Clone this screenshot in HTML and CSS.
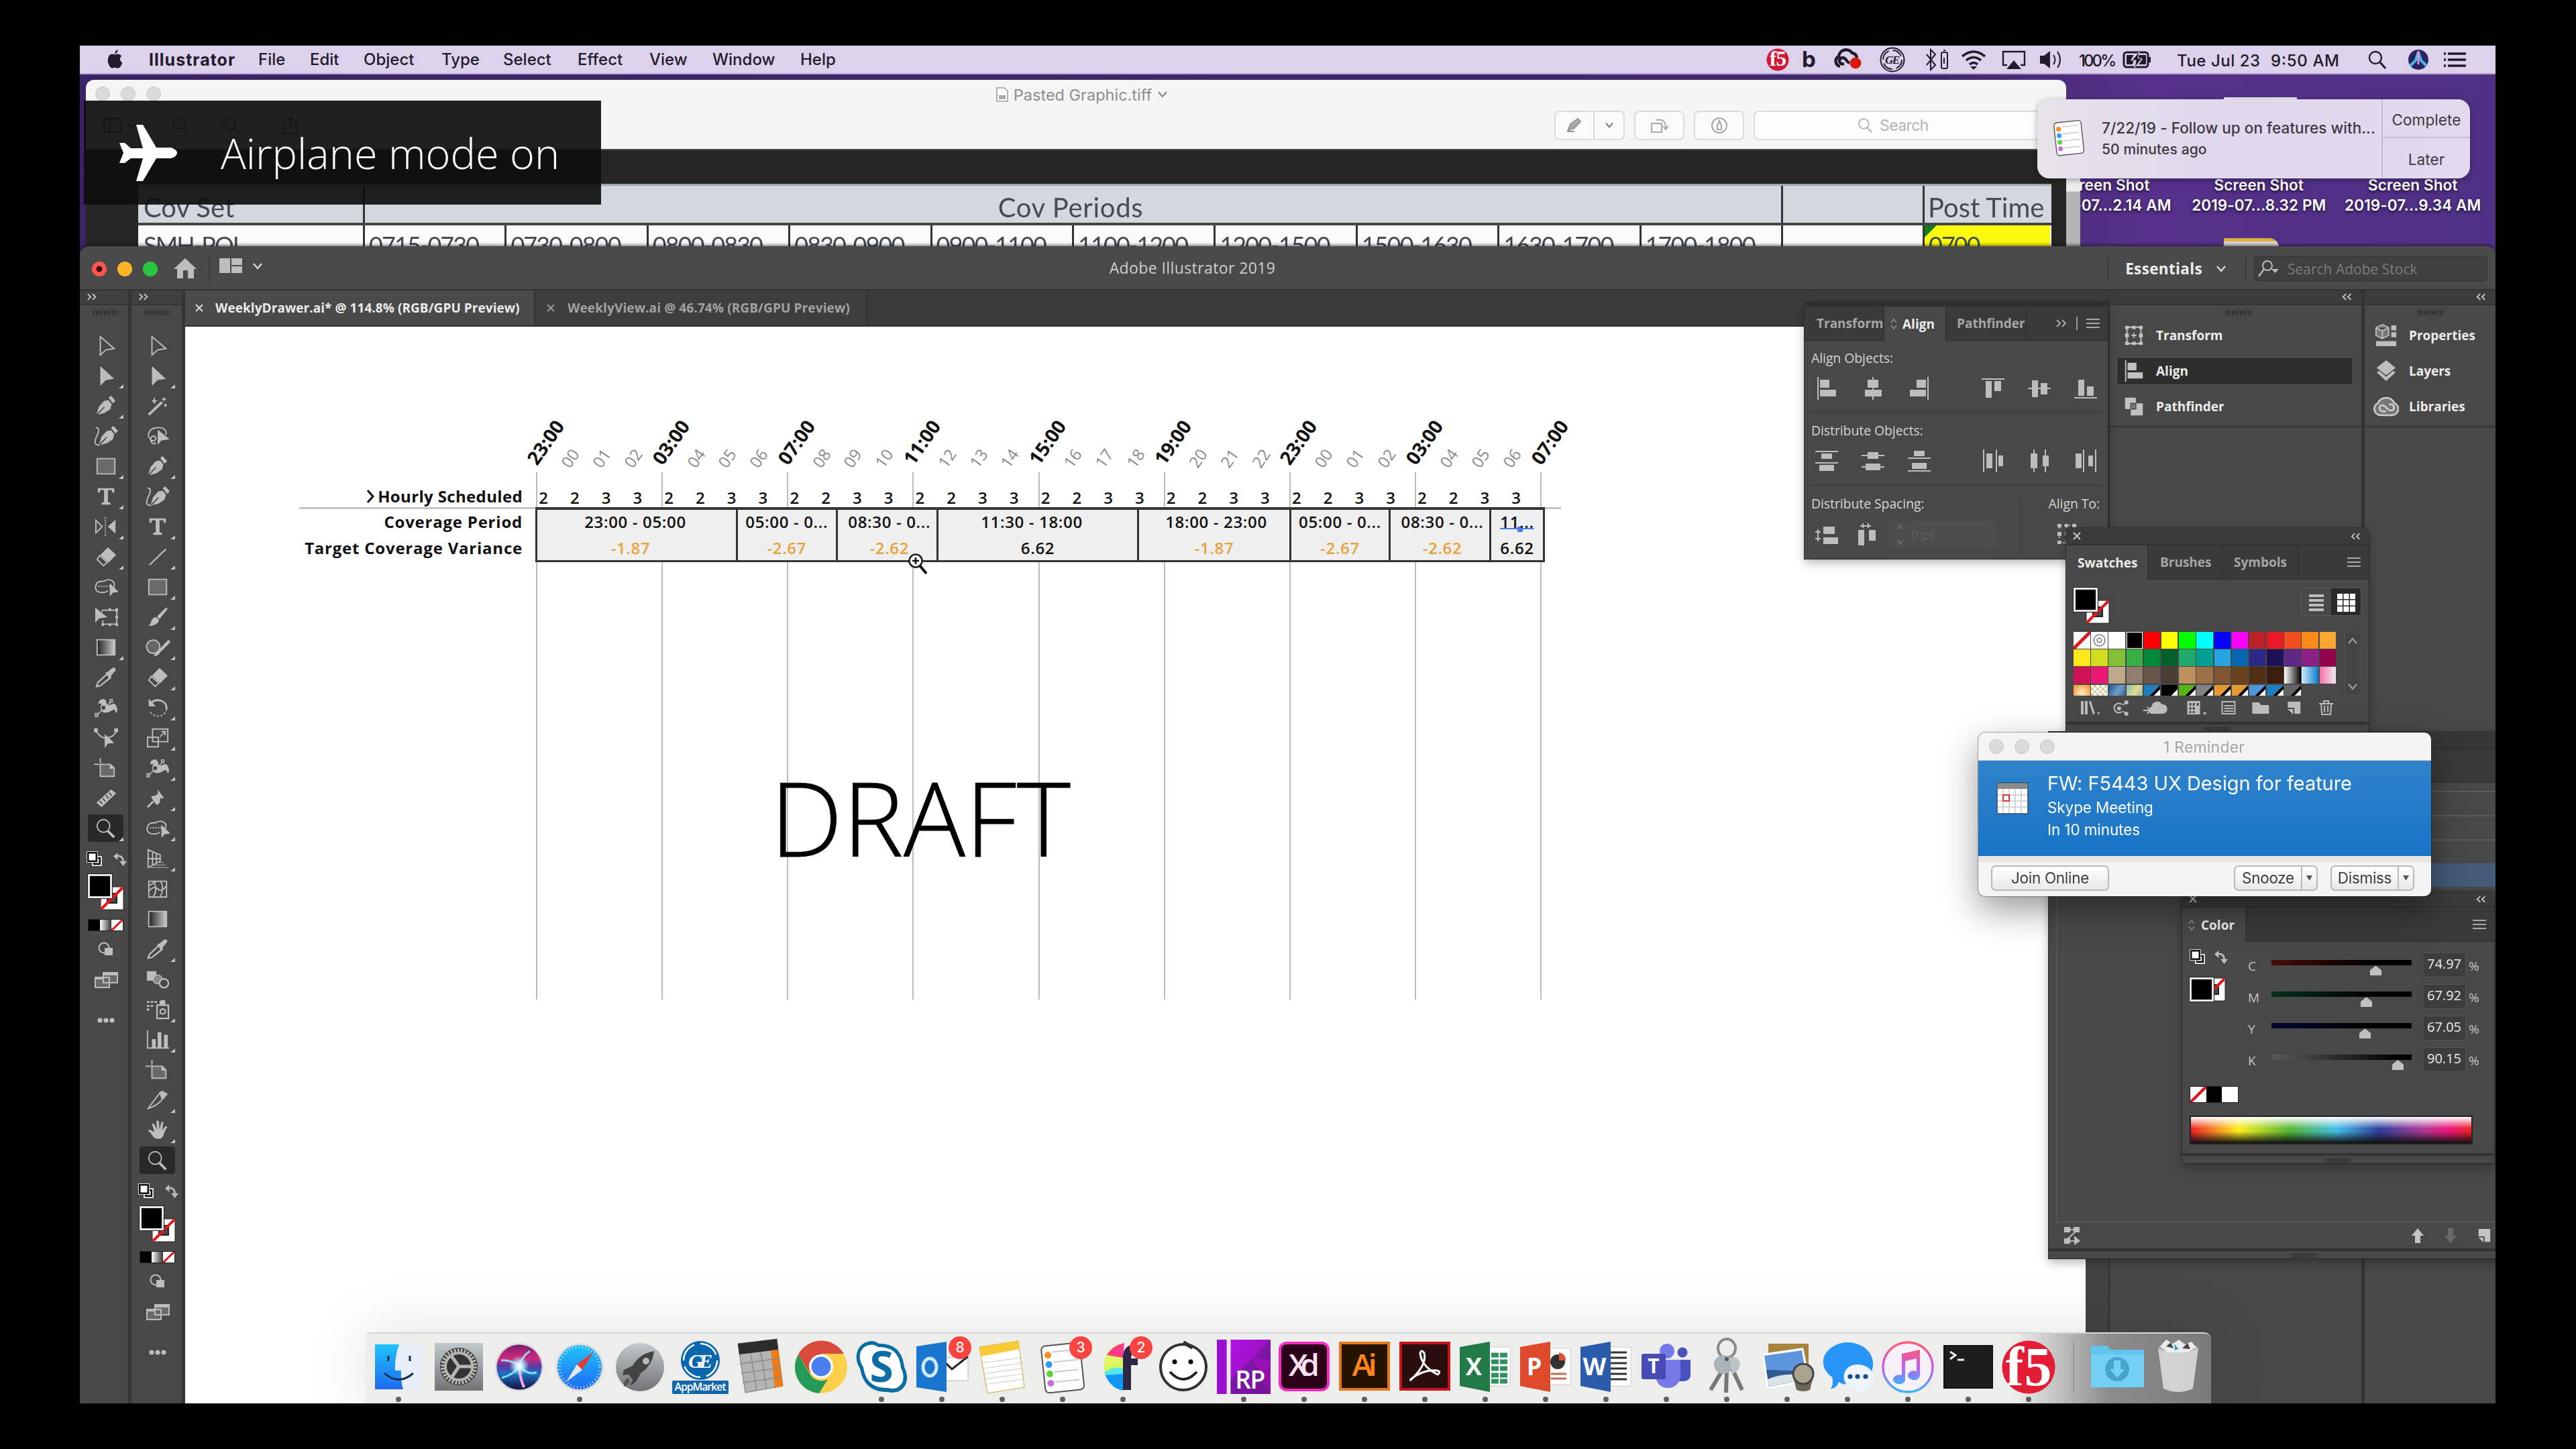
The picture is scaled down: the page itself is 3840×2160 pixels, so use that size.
FILE: index.html
```html
<!DOCTYPE html>
<html lang="en">
<head>
<meta charset="utf-8">
<title>Adobe Illustrator 2019</title>
<link rel="stylesheet" href="styles.css">
</head>
<body>
<svg class="defs" width="0" height="0" aria-hidden="true">
  <defs>
    <linearGradient id="g-bw"><stop offset="0" stop-color="#222"/><stop offset="1" stop-color="#ccc"/></linearGradient>
    <linearGradient id="g-gray" x2="0" y2="1"><stop offset="0" stop-color="#c3c9cc"/><stop offset="1" stop-color="#717475"/></linearGradient>
    <linearGradient id="g-blue" x2="0" y2="1"><stop offset="0" stop-color="#1fc3fb"/><stop offset="1" stop-color="#1e6bf1"/></linearGradient>
    <linearGradient id="g-siri" x2="0" y2="1"><stop offset="0" stop-color="#7a1f6e"/><stop offset=".3" stop-color="#d0287f"/><stop offset=".48" stop-color="#5a3aa0"/><stop offset=".65" stop-color="#1f6fc4"/><stop offset="1" stop-color="#161040"/></linearGradient>
    <radialGradient id="g-glow"><stop offset="0" stop-color="#fff"/><stop offset=".35" stop-color="#d5f6ff" stop-opacity=".9"/><stop offset="1" stop-color="#8ff" stop-opacity="0"/></radialGradient>
    <linearGradient id="g-note" x2="0" y2="1"><stop offset="0" stop-color="#fb5b74"/><stop offset=".5" stop-color="#c75bf0"/><stop offset="1" stop-color="#38b5f8"/></linearGradient>
    <linearGradient id="g-rp" x2="1" y2="1"><stop offset="0" stop-color="#b114e8"/><stop offset="1" stop-color="#8a0d9b"/></linearGradient>
    <symbol id="i-sel" viewBox="0 0 40 36"><path d="M11 4v29l9-8 13-2z" fill="none" stroke="currentColor" stroke-width="2"/></symbol>
    <symbol id="i-dsel" viewBox="0 0 40 36"><path d="M11 3v31l9-9 13-2z" fill="currentColor"/></symbol>
    <symbol id="i-pen" viewBox="0 0 40 36"><path d="M5 31l4-12 8-9 7-1 5 6-2 8-9 6-11 3 11-12-1-1z" fill="currentColor"/><path d="M24 5l4-3 7 8-4 4z" fill="currentColor"/></symbol>
    <symbol id="i-curve" viewBox="0 0 40 36"><path d="M9 31l4-12 8-9 7-1 5 6-2 8-9 6-11 3 11-12-1-1z" fill="currentColor"/><path d="M28 5l4-3 7 8-4 4z" fill="currentColor"/><path d="M4 5c6-1 5 6 2 12-4 8-6 16 4 15" fill="none" stroke="currentColor" stroke-width="2"/></symbol>
    <symbol id="i-rect" viewBox="0 0 40 36"><path d="M6 6h28v24H6z" fill="#6a6a6a" stroke="currentColor" stroke-width="2"/></symbol>
    <symbol id="i-type" viewBox="0 0 40 36"><path d="M7 5h26v7h-3l-1-4h-6v19l4 1v3H13v-3l4-1V8h-6l-1 4H7z" fill="currentColor"/></symbol>
    <symbol id="i-reflect" viewBox="0 0 40 36"><path d="M4 8v20l10-10z" fill="none" stroke="currentColor" stroke-width="2"/><path d="M35 7v22L23 18z" fill="currentColor"/><path d="M19 3v30" stroke="currentColor" stroke-width="2" stroke-dasharray="2 2"/></symbol>
    <symbol id="i-eraser" viewBox="0 0 40 36"><path d="M11 15L23 3l13 12-12 12z" fill="currentColor"/><path d="M10 16L6 22l10 10 6-5z" fill="none" stroke="currentColor" stroke-width="2"/></symbol>
    <symbol id="i-builder" viewBox="0 0 40 36"><path d="M9 26C3 24 2 18 5 13s9-4 12-4c6-5 16-2 16 5v4M9 26c5 1 11 1 14-2" fill="none" stroke="currentColor" stroke-width="2"/><path d="M8 17h18" stroke="currentColor" stroke-width="2" stroke-dasharray="2 2"/><path d="M26 12v21l5-6 9-1z" fill="currentColor"/></symbol>
    <symbol id="i-free" viewBox="0 0 40 36"><path d="M3 3v24l6-7 13-2z" fill="currentColor"/><path d="M14 7h23v22H15v-6M14 7v3" fill="none" stroke="currentColor" stroke-width="2"/><path d="M35 4h4v5h-4zM24 4h4v4h-4zM35 16h4v4h-4zM35 28h4v4h-4zM24 28h4v4h-4zM13 28h4v4h-4z" fill="currentColor"/></symbol>
    <symbol id="i-grad" viewBox="0 0 40 36"><path d="M6 6h28v24H6z" fill="url(#g-bw)" stroke="currentColor" stroke-width="2"/></symbol>
    <symbol id="i-drop" viewBox="0 0 40 36"><path d="M22 12L7 26l-2 6 6-1 16-13" fill="none" stroke="currentColor" stroke-width="2.4"/><path d="M19 10l4-1 7-6q4-1 5 1 1 4-2 5l-5 6v4l-2 2z" fill="currentColor"/></symbol>
    <symbol id="i-puppet" viewBox="0 0 40 36"><path d="M5 30L29 8" stroke="currentColor" stroke-width="1.6"/><path d="M3 27h4v5H3zM26 5h4v4h-4z" fill="none" stroke="currentColor" stroke-width="1.5"/><path d="M12 5q8-3 9 6 1 5 7 2 9-5 10 10l-2 4q-2-9-8-4-10 6-15 0-3-4 0-11-3-2-5 1 0-6 4-8z" fill="currentColor"/><circle cx="16" cy="18" r="4" fill="#484848" stroke="currentColor" stroke-width="1.5"/></symbol>
    <symbol id="i-anchor" viewBox="0 0 40 36"><path d="M3 6q10 14 17 12 12 0 17-12" fill="none" stroke="currentColor" stroke-width="2"/><path d="M1 3h6v6H1zM33 3h6v6h-6zM18 12v22l5-7 10-1z" fill="currentColor"/></symbol>
    <symbol id="i-artboard" viewBox="0 0 40 36"><path d="M1 12h9M11 2v8" stroke="currentColor" stroke-width="2"/><path d="M11 12h16l6 6v13H11z" fill="#6a6a6a" stroke="currentColor" stroke-width="2"/><path d="M26 12v7h7z" fill="currentColor"/></symbol>
    <symbol id="i-measure" viewBox="0 0 40 36"><path d="M5 25L28 4l8 6-23 22z" fill="currentColor"/><path d="M10 22l4 5M15 18l4 5M20 13l4 5M25 9l4 5" stroke="#484848" stroke-width="2"/></symbol>
    <symbol id="i-zoom" viewBox="0 0 40 36"><circle cx="16" cy="14" r="10" fill="none" stroke="currentColor" stroke-width="2"/><path d="M23 22l10 10" stroke="currentColor" stroke-width="4"/></symbol>
    <symbol id="i-wand" viewBox="0 0 40 36"><path d="M6 32L27 12" stroke="currentColor" stroke-width="4"/><path d="M15 4l1 5 4 1-4 2-1 4-2-4-3-2 3-1zM30 3l1 3 3 1-3 2-1 3-1-3-3-2 3-1zM32 14l3 3-3 3-2-3z" fill="currentColor"/></symbol>
    <symbol id="i-lasso" viewBox="0 0 40 36"><path d="M9 23c-6-3-5-16 8-18 15-2 19 7 15 11M9 23c2 5 9 2 8-2s-8-4-8 2c0 6 6 10 8 5" fill="none" stroke="currentColor" stroke-width="2"/><path d="M20 8v24l6-7 13-2z" fill="currentColor"/></symbol>
    <symbol id="i-line" viewBox="0 0 40 36"><path d="M7 31L33 6" stroke="currentColor" stroke-width="2.4"/></symbol>
    <symbol id="i-brush" viewBox="0 0 40 36"><path d="M19 17L33 3q3 0 2 3L23 21z" fill="currentColor"/><path d="M16 18q6 1 6 6-4 8-17 8 4-3 5-8 2-5 6-6z" fill="currentColor"/></symbol>
    <symbol id="i-blob" viewBox="0 0 40 36"><circle cx="13" cy="17" r="10.500" fill="#666" stroke="currentColor" stroke-width="2"/><path d="M39 7q2 3-1 5L24 26q-3 6-10 6 3-8 7-9L36 7z" fill="currentColor"/></symbol>
    <symbol id="i-rotate" viewBox="0 0 40 36"><path d="M9 11c9-9 26-5 25 9" fill="none" stroke="currentColor" stroke-width="3"/><path d="M34 20C31 34 14 35 7 23" fill="none" stroke="currentColor" stroke-width="2" stroke-dasharray="3 3"/><path d="M6 4v12h11z" fill="currentColor"/></symbol>
    <symbol id="i-scale" viewBox="0 0 40 36"><path d="M12 4h24v20H12zM4 17h17v15H4zM24 16l8-8m-6 0h6v6" fill="none" stroke="currentColor" stroke-width="2"/></symbol>
    <symbol id="i-pin" viewBox="0 0 40 36"><path d="M4 32l9-9" stroke="currentColor" stroke-width="3"/><path d="M17 4l13 12-6 1 1 7-4 5-7-6-5-6 6-2 4-4z" fill="currentColor" transform="rotate(12 20 18)"/></symbol>
    <symbol id="i-persp" viewBox="0 0 40 36"><path d="M5 4v28L24 22V12zM5 18h19M12 7v22M18 9v17" fill="none" stroke="currentColor" stroke-width="2"/><path d="M15 28h18M8 32h29M22 24h8" stroke="currentColor"/></symbol>
    <symbol id="i-mesh" viewBox="0 0 40 36"><path d="M6 6h28v25H6zM6 22q8-10 14-4t14-5M13 6q8 12 0 25M25 6q6 12-1 25M6 13q8-4 12-7" fill="none" stroke="currentColor" stroke-width="2"/></symbol>
    <symbol id="i-blend" viewBox="0 0 40 36"><path d="M3 5h15v15H3z" fill="currentColor"/><circle cx="20" cy="18" r="7" fill="#888" stroke="currentColor" stroke-width="1.500"/><circle cx="30" cy="24" r="7" fill="#484848" stroke="currentColor" stroke-width="2.400"/></symbol>
    <symbol id="i-spray" viewBox="0 0 40 36"><path d="M19 11h18v21H19z" fill="none" stroke="currentColor" stroke-width="2.400"/><path d="M23 10V5l3-2h6v7z" fill="currentColor"/><circle cx="28" cy="21" r="4" fill="none" stroke="currentColor" stroke-width="2.400"/><path d="M3 6h16M3 12h10M3 18h5" stroke="currentColor" stroke-width="3" stroke-dasharray="4 2"/></symbol>
    <symbol id="i-graph" viewBox="0 0 40 36"><path d="M4 3v28h34" fill="none" stroke="currentColor" stroke-width="2"/><path d="M11 17h6v14h-6zM20 6h6v25h-6zM30 10h6v21h-6z" fill="currentColor"/></symbol>
    <symbol id="i-slice" viewBox="0 0 40 36"><path d="M24 6L5 31q14-4 22-14z" fill="none" stroke="currentColor" stroke-width="2"/><path d="M23 7l4-4 9 5-7 9z" fill="currentColor"/></symbol>
    <symbol id="i-hand" viewBox="0 0 40 36"><path d="M13 28Q8 20 5 19q1-3 5-1l5 3-4-13q3-2 4 1l4 8-1-13q2-3 4 0l1 13 3-12q3-2 3 1l-2 12 5-6q3-1 3 1-5 8-6 14-5 7-14 3z" fill="currentColor"/></symbol>
    <symbol id="i-default" viewBox="0 0 24 24"><path d="M9 8h13v13H9z" fill="#000" stroke="#ddd" stroke-width="2"/><path d="M13 12h5v5h-5z" fill="none" stroke="#ddd" stroke-width="1.500"/><path d="M2 2h13v13H2z" fill="#fff" stroke="#111" stroke-width="3"/><path d="M.5.500h16v16H.5z" fill="none" stroke="#ddd"/></symbol>
    <symbol id="i-swap" viewBox="0 0 24 24"><path d="M5 7q12-3 12 10" fill="none" stroke="#bdbdbd" stroke-width="3"/><path d="M8 1v12L1 7zM11 15h12l-6 8z" fill="#bdbdbd"/></symbol>
    <symbol id="i-none" viewBox="0 0 36 36"><path d="M1 1h34v34H1z" fill="#fff" stroke="#222"/><path d="M11 11h14v14H11z" fill="#484848" stroke="#222" stroke-width="2"/><path d="M2 34L34 2" stroke="#e8151b" stroke-width="4"/></symbol>
    <symbol id="i-drawmode" viewBox="0 0 24 24"><circle cx="9" cy="10" r="7.500" fill="none" stroke="#bdbdbd" stroke-width="2"/><path d="M10 10h12v11H10z" fill="#bdbdbd"/></symbol>
    <symbol id="i-screen" viewBox="0 0 40 30"><path d="M4 10h21v15H4zM16 3h21v15H16z" fill="#6a6a6a" stroke="#bdbdbd" stroke-width="2"/><path d="M15 2h23v5H15zM3 9h12v4H3z" fill="#bdbdbd"/></symbol>
    <symbol id="i-dots" viewBox="0 0 40 12"><circle cx="10" cy="6" r="4" fill="#bdbdbd"/><circle cx="20" cy="6" r="4" fill="#bdbdbd"/><circle cx="30" cy="6" r="4" fill="#bdbdbd"/></symbol>
    <symbol id="i-x" viewBox="0 0 14 14"><path d="M2 2l10 10M12 2L2 12" stroke="currentColor" stroke-width="2"/></symbol>
    <symbol id="i-ll" viewBox="0 0 18 12"><path d="M7 1L2 6l5 5M15 1l-5 5 5 5" fill="none" stroke="currentColor" stroke-width="2"/></symbol>
    <symbol id="i-rr" viewBox="0 0 18 12"><path d="M2 1l5 5-5 5M10 1l5 5-5 5" fill="none" stroke="currentColor" stroke-width="2"/></symbol>
    <symbol id="i-menu" viewBox="0 0 20 16"><path d="M0 2h20M0 8h20M0 14h20" stroke="currentColor" stroke-width="2"/></symbol>
    <symbol id="i-updown" viewBox="0 0 12 20"><path d="M2 8l4-5 4 5M2 12l4 5 4-5" fill="none" stroke="#888" stroke-width="1.800"/></symbol>
    <symbol id="i-chev" viewBox="0 0 16 12"><path d="M2 2l6 7 6-7" fill="none" stroke="currentColor" stroke-width="2.400"/></symbol>
    <symbol id="i-mag" viewBox="0 0 28 28"><circle cx="12" cy="11" r="8.500" fill="none" stroke="currentColor" stroke-width="2.200"/><path d="M18 18l8 8" stroke="currentColor" stroke-width="2.600"/></symbol>
    <symbol id="a-l" viewBox="0 0 34 36"><path d="M3 1h2v34H3zM7 5h14v12H7zM7 20h24v10H7z" fill="currentColor"/></symbol>
    <symbol id="a-c" viewBox="0 0 34 36"><path d="M16 1h2v34h-2zM9 5h16v12H9zM5 20h25v10H5z" fill="currentColor"/></symbol>
    <symbol id="a-r" viewBox="0 0 34 36"><path d="M29 1h2v34h-2zM13 5h14v12H13zM3 20h24v10H3z" fill="currentColor"/></symbol>
    <symbol id="a-t" viewBox="0 0 34 36"><path d="M0 3h34v2H0zM6 7h9v25H6zM19 7h10v15H19z" fill="currentColor"/></symbol>
    <symbol id="a-m" viewBox="0 0 34 36"><path d="M0 17h34v2H0zM6 6h9v25H6zM19 10h10v17H19z" fill="currentColor"/></symbol>
    <symbol id="a-b" viewBox="0 0 34 36"><path d="M0 31h34v2H0zM6 5h9v24H6zM19 15h10v14H19z" fill="currentColor"/></symbol>
    <symbol id="d-t" viewBox="0 0 34 36"><path d="M0 3h34v2H0zM9 7h16v8H9zM0 20h34v2H0zM6 24h22v9H6z" fill="currentColor"/></symbol>
    <symbol id="d-m" viewBox="0 0 34 36"><path d="M0 9h34v2H0zM9 5h16v10H9zM0 26h34v2H0zM6 22h22v10H6z" fill="currentColor"/></symbol>
    <symbol id="d-b" viewBox="0 0 34 36"><path d="M9 3h16v8H9zM0 13h34v2H0zM6 21h22v9H6zM0 32h34v2H0z" fill="currentColor"/></symbol>
    <symbol id="d-l" viewBox="0 0 34 36"><path d="M2 1h2v34H2zM7 7h9v22H7zM21 1h2v34h-2zM25 10h7v16h-7z" fill="currentColor"/></symbol>
    <symbol id="d-c" viewBox="0 0 34 36"><path d="M8 1h2v34H8zM4 7h10v22H4zM25 1h2v34h-2zM22 10h9v16h-9z" fill="currentColor"/></symbol>
    <symbol id="d-r" viewBox="0 0 34 36"><path d="M2 7h9v22H2zM13 1h2v34h-2zM21 10h7v16h-7zM31 1h2v34h-2z" fill="currentColor"/></symbol>
    <symbol id="s-v" viewBox="0 0 34 36"><path d="M12 5h17v11H12zM12 21h22v10H12zM0 12h8v2H0zM0 22h8v2H0zM3 9h2v18H3z" fill="currentColor"/></symbol>
    <symbol id="s-h" viewBox="0 0 34 36"><path d="M4 10h9v23H4zM20 10h10v16H20zM10 0h2v7h-2zM18 0h2v7h-2zM7 3h16v2H7z" fill="currentColor"/></symbol>
    <symbol id="p-tr" viewBox="0 0 34 36"><path d="M6 5h22v26H6z" fill="none" stroke="currentColor" stroke-width="2" /><path d="M3 3h6v5H3zM14 3h6v5h-6zM25 3h6v5h-6zM3 15h6v6H3zM25 15h6v6h-6zM3 28h6v5H3zM14 28h6v5h-6zM25 28h6v5h-6zM16 14h2v8h-2zM13 17h8v2h-8z" fill="currentColor"/></symbol>
    <symbol id="p-sel" viewBox="0 0 34 36"><path d="M6 5h22v26H6z" fill="none" stroke="currentColor" stroke-width="2" stroke-dasharray="2 5"/><path d="M3 3h6v5H3zM14 3h5v5h-5zM25 3h6v5h-6zM3 15h6v6H3zM14 15h5v5h-5zM25 15h6v6h-6zM3 28h6v5H3zM14 28h6v5h-6zM25 28h6v5h-6z" fill="currentColor"/></symbol>
    <symbol id="p-pf" viewBox="0 0 34 36"><path d="M3 4h17v18H3zM12 13h19v19H12z" fill="currentColor"/><path d="M12 13h8v9h-8z" fill="#777" stroke="#484848" stroke-width="1.500"/></symbol>
    <symbol id="p-prop" viewBox="0 0 36 36"><path d="M12 1l10 5v12l-10 5-10-5V6zM2 6l10 5 10-5M12 11v12" fill="#777" stroke="#bdbdbd" stroke-width="2"/><path d="M26 2h8v8h-8zM26 13h8v8h-8zM2 27h32v8H2z" fill="#bdbdbd"/></symbol>
    <symbol id="p-layers" viewBox="0 0 36 36"><path d="M18 1l15 12-15 12L3 13z" fill="#bdbdbd"/><path d="M3 20l4-2 11 9 11-9 4 2-15 14z" fill="#bdbdbd"/></symbol>
    <symbol id="p-lib" viewBox="0 0 44 36"><path d="M12 33a11 11 0 0 1-4-21A15 14 0 0 1 36 12a12 11 0 0 1-4 21z" fill="#777" stroke="#cfcfcf" stroke-width="3"/><path d="M22 26c-14 4-14-13-5-10 5 2 8 9 13 9 9 0 6-15-3-10" fill="none" stroke="#cfcfcf" stroke-width="3"/></symbol>
    <symbol id="i-new" viewBox="0 0 24 24"><path d="M3 1h19v21H13v-9H3z" fill="currentColor"/><path d="M3 15h8v8z" fill="currentColor"/></symbol>
    <symbol id="reminders" viewBox="0 0 80 80"><g transform="rotate(-6 40 40)"><rect x="11" y="6" width="58" height="70" rx="6" fill="#fdfdfd" stroke="#555" stroke-width="2"/><path d="M27 16h36M27 31h36M27 46h36M27 61h36" stroke="#ccc" stroke-width="2"/><circle cx="20" cy="20" r="5" fill="#fb8a1e"/><circle cx="20" cy="34" r="5" fill="#2a9df4"/><circle cx="20" cy="48" r="5" fill="#5fd13c"/><circle cx="20" cy="62" r="5" fill="#c46fdc"/></g></symbol>
  </defs>
</svg>

<main class="desktop">
  <section class="shots">
    <p>Screen Shot<br>2019-07...2.14 AM</p>
    <p>Screen Shot<br>2019-07...8.32 PM</p>
    <p>Screen Shot<br>2019-07...9.34 AM</p>
  </section>
  <i class="thumb-top"></i><i class="thumb"></i>
  <i class="back-window"></i>

  <header class="menubar">
    <svg class="apple" viewBox="0 0 26 32"><path d="M18 1q0 5-5 7 0-5 5-7zM13 9q7-3 11 2-6 5 1 11-4 11-9 8-3-1-6 0Q5 32 2 20 2 8 9 8q2 0 4 1z" fill="#231a2c"/></svg>
    <nav><b>Illustrator</b><span>File</span><span>Edit</span><span>Object</span><span>Type</span><span>Select</span><span>Effect</span><span>View</span><span>Window</span><span>Help</span></nav>
    <svg class="status" viewBox="0 0 1100 42" width="1100" height="42">
      <circle cx="31" cy="21" r="16.500" fill="#d11a38"/><text x="19" y="30" class="f5s" textLength="25">f5</text>
      <text x="67" y="32" class="bs">b</text>
      <path d="M124 31a8 8 0 0 1-2-15 11 11 0 0 1 20-5q6 1 7 7M130 27c-9 2-9-9-2-9 5 0 5 6 10 8" fill="none" stroke="#231a2c" stroke-width="4.500"/><circle cx="147" cy="26" r="8.500" fill="#d81a0c"/>
      <circle cx="202" cy="21" r="17.500" fill="none" stroke="#231a2c" stroke-width="2"/><circle cx="202" cy="21" r="14" fill="none" stroke="#231a2c" stroke-width="2" stroke-dasharray="16 6"/><text x="191" y="27" class="ges" textLength="22">GE</text>
      <path d="M253 13l13 16-7 7V6l7 7-13 16" fill="none" stroke="#231a2c" stroke-width="2"/><rect x="275" y="10" width="9" height="24" rx="2" fill="none" stroke="#231a2c" stroke-width="2"/><path d="M278 7h3M279 18v9" stroke="#231a2c" stroke-width="2"/>
      <path d="M306 16q17-14 34 0M312 22q11-9 22 0M317 28q6-5 12 0" fill="none" stroke="#231a2c" stroke-width="3.600"/><path d="M318 31h10l-5 5z" fill="#231a2c"/>
      <path d="M373 29h-6V9h32v20h-6" fill="none" stroke="#231a2c" stroke-width="2.400"/><path d="M383 22l11 13h-22z" fill="#231a2c"/>
      <path d="M422 15h6l9-7v26l-9-7h-6z" fill="#231a2c"/><path d="M442 14q5 7 0 14M448 9q8 12 0 24" fill="none" stroke="#231a2c" stroke-width="2"/>
      <text x="480" y="30.500" class="mb" textLength="56">100%</text>
      <rect x="547" y="10" width="36" height="22" rx="4" fill="none" stroke="#231a2c" stroke-width="3"/><path d="M551 14h11l-5 8h5l-2 6h-9zM568 14h12v14h-11l6-8h-6zM584 17h3v8h-3z" fill="#231a2c"/><path d="M570 9l-11 13h6l-2 11 11-14h-6z" fill="#231a2c" stroke="#dcd2eb"/>
      <text x="626" y="30.500" class="mb" textLength="124">Tue Jul 23</text><text x="766" y="30.500" class="mb" textLength="102">9:50 AM</text>
      <circle cx="922" cy="18" r="9" fill="none" stroke="#231a2c" stroke-width="2.400"/><path d="M929 25l8 9" stroke="#231a2c" stroke-width="3"/>
      <circle cx="986" cy="21" r="15" fill="#2b2266"/><path d="M986 10l-4 12-8 8M986 10l4 12 8 8" stroke="#4bd" stroke-width="4" fill="none"/><path d="M986 8v20" stroke="#e78bd8" stroke-width="3"/>
      <path d="M1030 12h27M1030 21h27M1030 30h27" stroke="#231a2c" stroke-width="3.400"/><path d="M1024 12h3M1024 21h3M1024 30h3" stroke="#231a2c" stroke-width="3.400"/>
    </svg>
  </header>

  <section class="preview">
    <div class="lights pale"><i></i><i></i><i></i></div>
    <div class="preview-title"><svg width="18" height="22" viewBox="0 0 18 22"><path d="M1 1h11l5 5v15H1z" fill="#fff" stroke="#999" stroke-width="1.500"/><path d="M4 12h10v6H4z" fill="#aaa"/></svg>Pasted Graphic.tiff<svg width="16" height="12"><use href="#i-chev"/></svg></div>
    <div class="preview-tools">
      <span class="pbtn w78"><svg width="52" height="26" viewBox="0 0 52 26"><path d="M2 3h26v20H2zM11 3v20" fill="none" stroke="#444" stroke-width="2"/><path d="M38 10l5 6 5-6" fill="none" stroke="#444" stroke-width="2"/></svg></span>
      <span class="pbtn w75"><svg width="28" height="28"><use href="#i-mag"/></svg></span>
      <span class="pbtn w75 join"><svg width="28" height="28"><use href="#i-mag"/></svg></span>
      <span class="pbtn w78"><svg width="24" height="28" viewBox="0 0 24 28"><path d="M7 10H2v16h20V10h-5M12 18V3M7 7l5-5 5 5" fill="none" stroke="#444" stroke-width="2"/></svg></span>
      <span class="gap"></span>
      <span class="pbtn w60"><svg width="28" height="24" viewBox="0 0 28 24"><path d="M4 20l4-10L19 2l4 4-9 10zM4 21h10" fill="#aaa" stroke="#999" stroke-width="2"/></svg></span>
      <span class="pbtn w46"><svg width="14" height="10"><use href="#i-chev"/></svg></span>
      <span class="pbtn w75 ml"><svg width="30" height="26" viewBox="0 0 30 26"><path d="M3 10h15v13H3zM10 5q15-3 14 13M20 14l4 5 4-5" fill="none" stroke="#a8a8a8" stroke-width="2"/></svg></span>
      <span class="pbtn w75 ml"><svg width="28" height="28" viewBox="0 0 28 28"><circle cx="14" cy="14" r="11" fill="none" stroke="#a8a8a8" stroke-width="2"/><path d="M11 20v-6l3-7 3 7v6z" fill="none" stroke="#a8a8a8" stroke-width="2"/></svg></span>
      <span class="psearch"><svg width="24" height="24"><use href="#i-mag"/></svg>Search</span>
    </div>
    <div class="preview-body">
      <div class="sheet">
        <div class="sheet-head"><span>Cov Set</span><span>Cov Periods</span><span></span><span>Post Time</span></div>
        <div class="sheet-row"><span>SMH-POI</span><span>0715-0730</span><span>0730-0800</span><span>0800-0830</span><span>0830-0900</span><span>0900-1100</span><span>1100-1200</span><span>1200-1500</span><span>1500-1630</span><span>1630-1700</span><span>1700-1800</span><span></span><span class="post">0700</span></div>
      </div>
    </div>
  </section>

  <section class="ai">
    <header class="ai-title">
      <div class="lights"><i class="r"></i><i class="y"></i><i class="g"></i></div>
      <svg class="home" width="36" height="30" viewBox="0 0 36 30"><path d="M18 0l17 16h-4v14h-9V18h-7v12H6V16H1z" fill="#bdbdbd"/></svg>
      <i class="vsep"></i>
      <svg class="arrange" width="34" height="22" viewBox="0 0 34 22"><path d="M0 0h16v22H0zM18 0h16v10H18zM18 12h16v10H18z" fill="#bdbdbd"/></svg>
      <svg class="ac" width="16" height="12"><use href="#i-chev"/></svg>
      <h1>Adobe Illustrator 2019</h1>
      <i class="vsep"></i>
      <span class="ess">Essentials</span><svg width="16" height="12"><use href="#i-chev"/></svg>
      <i class="vsep s2"></i>
      <span class="stock"><svg width="32" height="28" viewBox="0 0 32 28"><circle cx="14" cy="9" r="7" fill="none" stroke="#bbb" stroke-width="2"/><path d="M9 14L1 25" stroke="#bbb" stroke-width="2.400"/><path d="M20 14h11l-5.500 6z" fill="#bbb"/></svg>Search Adobe Stock</span>
    </header>
    <div class="ai-main">
      <aside class="tools">
        <div class="tools-head"><svg width="16" height="11"><use href="#i-rr"/></svg></div>
        <i class="grip"></i>
        <ul>
          <li><svg><use href="#i-sel"/></svg></li>
          <li class="more"><svg><use href="#i-dsel"/></svg></li>
          <li class="more"><svg><use href="#i-pen"/></svg></li>
          <li><svg><use href="#i-curve"/></svg></li>
          <li class="more"><svg><use href="#i-rect"/></svg></li>
          <li class="more"><svg><use href="#i-type"/></svg></li>
          <li class="more"><svg><use href="#i-reflect"/></svg></li>
          <li class="more"><svg><use href="#i-eraser"/></svg></li>
          <li><svg><use href="#i-builder"/></svg></li>
          <li><svg><use href="#i-free"/></svg></li>
          <li class="more"><svg><use href="#i-grad"/></svg></li>
          <li><svg><use href="#i-drop"/></svg></li>
          <li><svg><use href="#i-puppet"/></svg></li>
          <li><svg><use href="#i-anchor"/></svg></li>
          <li><svg><use href="#i-artboard"/></svg></li>
          <li><svg><use href="#i-measure"/></svg></li>
          <li class="more on"><svg><use href="#i-zoom"/></svg></li>
        </ul>
        <div class="swaprow"><svg width="24" height="24"><use href="#i-default"/></svg><svg width="22" height="22"><use href="#i-swap"/></svg></div>
        <div class="fillstroke"><svg width="36" height="36"><use href="#i-none"/></svg><b></b></div>
        <div class="trio"><i></i><i></i><i></i></div>
        <div class="modes"><svg width="24" height="24"><use href="#i-drawmode"/></svg><svg width="40" height="30"><use href="#i-screen"/></svg><svg width="36" height="12"><use href="#i-dots"/></svg></div>
      </aside>
      <aside class="tools">
        <div class="tools-head"><svg width="16" height="11"><use href="#i-rr"/></svg></div>
        <i class="grip"></i>
        <ul>
          <li><svg><use href="#i-sel"/></svg></li>
          <li class="more"><svg><use href="#i-dsel"/></svg></li>
          <li><svg><use href="#i-wand"/></svg></li>
          <li><svg><use href="#i-lasso"/></svg></li>
          <li class="more"><svg><use href="#i-pen"/></svg></li>
          <li><svg><use href="#i-curve"/></svg></li>
          <li class="more"><svg><use href="#i-type"/></svg></li>
          <li class="more"><svg><use href="#i-line"/></svg></li>
          <li class="more"><svg><use href="#i-rect"/></svg></li>
          <li class="more"><svg><use href="#i-brush"/></svg></li>
          <li class="more"><svg><use href="#i-blob"/></svg></li>
          <li class="more"><svg><use href="#i-eraser"/></svg></li>
          <li class="more"><svg><use href="#i-rotate"/></svg></li>
          <li class="more"><svg><use href="#i-scale"/></svg></li>
          <li class="more"><svg><use href="#i-puppet"/></svg></li>
          <li class="more"><svg><use href="#i-pin"/></svg></li>
          <li class="more"><svg><use href="#i-builder"/></svg></li>
          <li class="more"><svg><use href="#i-persp"/></svg></li>
          <li><svg><use href="#i-mesh"/></svg></li>
          <li><svg><use href="#i-grad"/></svg></li>
          <li class="more"><svg><use href="#i-drop"/></svg></li>
          <li><svg><use href="#i-blend"/></svg></li>
          <li class="more"><svg><use href="#i-spray"/></svg></li>
          <li class="more"><svg><use href="#i-graph"/></svg></li>
          <li><svg><use href="#i-artboard"/></svg></li>
          <li class="more"><svg><use href="#i-slice"/></svg></li>
          <li class="more"><svg><use href="#i-hand"/></svg></li>
          <li class="on"><svg><use href="#i-zoom"/></svg></li>
        </ul>
        <div class="swaprow"><svg width="24" height="24"><use href="#i-default"/></svg><svg width="22" height="22"><use href="#i-swap"/></svg></div>
        <div class="fillstroke"><svg width="36" height="36"><use href="#i-none"/></svg><b></b></div>
        <div class="trio"><i></i><i></i><i></i></div>
        <div class="modes"><svg width="24" height="24"><use href="#i-drawmode"/></svg><svg width="40" height="30"><use href="#i-screen"/></svg><svg width="36" height="12"><use href="#i-dots"/></svg></div>
      </aside>

      <div class="doc">
        <div class="tabs">
          <span class="tab on"><svg width="14" height="14"><use href="#i-x"/></svg><em>WeeklyDrawer.ai* @ 114.8% (RGB/GPU Preview)</em></span>
          <span class="tab"><svg width="14" height="14"><use href="#i-x"/></svg><em>WeeklyView.ai @ 46.74% (RGB/GPU Preview)</em></span>
        </div>
        <div class="canvas">
          <div class="artwork">
            <div class="guides"><i></i><i></i><i></i><i></i><i></i><i></i><i></i><i></i><i></i></div>
            <div class="hours"><b>23:00</b><span>00</span><span>01</span><span>02</span><b>03:00</b><span>04</span><span>05</span><span>06</span><b>07:00</b><span>08</span><span>09</span><span>10</span><b>11:00</b><span>12</span><span>13</span><span>14</span><b>15:00</b><span>16</span><span>17</span><span>18</span><b>19:00</b><span>20</span><span>21</span><span>22</span><b>23:00</b><span>00</span><span>01</span><span>02</span><b>03:00</b><span>04</span><span>05</span><span>06</span><b>07:00</b></div>
            <div class="sched">
              <div class="label"><svg width="13" height="20" viewBox="0 0 13 20"><path d="M2 1l8 9-8 9" fill="none" stroke="#111" stroke-width="3"/></svg>Hourly Scheduled</div>
              <div class="counts"><span>2</span><span>2</span><span>3</span><span>3</span><span>2</span><span>2</span><span>3</span><span>3</span><span>2</span><span>2</span><span>3</span><span>3</span><span>2</span><span>2</span><span>3</span><span>3</span><span>2</span><span>2</span><span>3</span><span>3</span><span>2</span><span>2</span><span>3</span><span>3</span><span>2</span><span>2</span><span>3</span><span>3</span><span>2</span><span>2</span><span>3</span><span>3</span></div>
            </div>
            <div class="cover">
              <div class="labels"><span>Coverage Period</span><span>Target Coverage Variance</span></div>
              <div class="periods">
                <div><span class="a">23:00 - 05:00</span><span class="neg b">-1.87</span></div>
                <div><span>05:00 - 0...</span><span class="neg">-2.67</span></div>
                <div class="right"><span>08:30 - 0...</span><span class="neg">-2.62</span></div>
                <div><span class="nudge">11:30 - 18:00</span><span>6.62</span></div>
                <div><span class="c5">18:00 - 23:00</span><span class="neg">-1.87</span></div>
                <div><span>05:00 - 0...</span><span class="neg">-2.67</span></div>
                <div class="right"><span>08:30 - 0...</span><span class="neg">-2.62</span></div>
                <div><span class="baseline">11...</span><span>6.62</span></div>
              </div>
            </div>
            <div class="draft">DRAFT</div>
            <svg class="cursor" width="32" height="34" viewBox="0 0 32 34"><circle cx="12" cy="13" r="9.500" fill="#fff" stroke="#222" stroke-width="2.600"/><path d="M12 8v10M7 13h10" stroke="#111" stroke-width="2.600"/><path d="M18 20l10 12" stroke="#111" stroke-width="4"/></svg>
          </div>
        </div>
      </div>

      <aside class="dockcol a">
        <div class="dock-head"><svg width="16" height="11"><use href="#i-ll"/></svg></div>
        <div class="dock-body"><i class="grip"></i>
          <p><svg width="34" height="36"><use href="#p-tr"/></svg>Transform</p>
          <p class="on"><svg width="34" height="36"><use href="#a-l"/></svg>Align</p>
          <p><svg width="34" height="36"><use href="#p-pf"/></svg>Pathfinder</p>
        </div>
      </aside>
      <aside class="dockcol b">
        <div class="dock-head"><svg width="16" height="11"><use href="#i-ll"/></svg></div>
        <div class="dock-body"><i class="grip"></i>
          <p><svg width="34" height="36"><use href="#p-prop"/></svg>Properties</p>
          <p><svg width="34" height="36"><use href="#p-layers"/></svg>Layers</p>
          <p class="lib"><svg><use href="#p-lib"/></svg>Libraries</p>
        </div>
      </aside>
    </div>
  </section>

  <section class="panel align">
    <div class="ptabs"><span class="tr">Transform</span><span class="on"><svg width="12" height="20"><use href="#i-updown"/></svg>Align</span><span>Pathfinder</span><div class="more-tabs"><svg width="18" height="18" viewBox="0 0 18 12"><use href="#i-rr"/></svg><i></i><svg width="20" height="16"><use href="#i-menu"/></svg></div></div>
    <div class="group"><h2>Align Objects:</h2><div class="icons"><svg><use href="#a-l"/></svg><svg><use href="#a-c"/></svg><svg><use href="#a-r"/></svg><svg class="far"><use href="#a-t"/></svg><svg><use href="#a-m"/></svg><svg><use href="#a-b"/></svg></div></div>
    <div class="group"><h2>Distribute Objects:</h2><div class="icons"><svg><use href="#d-t"/></svg><svg><use href="#d-m"/></svg><svg><use href="#d-b"/></svg><svg class="far"><use href="#d-l"/></svg><svg><use href="#d-c"/></svg><svg><use href="#d-r"/></svg></div></div>
    <div class="group last"><div class="sp"><h2>Distribute Spacing:</h2><div class="icons"><svg><use href="#s-v"/></svg><svg><use href="#s-h"/></svg><span class="pt"><svg width="12" height="34" viewBox="0 0 12 34"><path d="M2 9l4-6 4 6M2 25l4 6 4-6" fill="none" stroke="#6a6a6a" stroke-width="2"/></svg>0 pt</span></div></div><div class="to"><h2>Align To:</h2><svg width="34" height="36"><use href="#p-sel"/></svg></div></div>
  </section>

  <section class="panel layers">
    <div class="lh"></div>
    <div class="lrows"><i></i><i></i><i></i><i class="sel"></i></div>
    <div class="lfoot"><svg width="26" height="28" viewBox="0 0 26 28"><path d="M1 1h9v8H1zM15 1h9v8h-9zM1 18h9v8H1zM16 14l9 8-9 6z" fill="#bdbdbd"/><path d="M8 5h9M19 7L6 19M8 22h9" stroke="#bdbdbd" stroke-width="2"/></svg><span></span><svg width="20" height="24" viewBox="0 0 20 24"><path d="M10 1l9 11h-5v11H6V12H1z" fill="#c4c4c4"/></svg><svg width="20" height="24" viewBox="0 0 20 24"><path d="M10 23l9-11h-5V1H6v11H1z" fill="#6a6a6a"/></svg><svg width="22" height="22" color="#c4c4c4"><use href="#i-new"/></svg></div>
    <div class="pgrip"><i class="grip"></i></div>
  </section>

  <section class="panel swatches">
    <div class="phead"><svg width="14" height="14"><use href="#i-x"/></svg><svg width="16" height="11"><use href="#i-ll"/></svg></div>
    <div class="ptabs"><span class="on">Swatches</span><span>Brushes</span><span>Symbols</span><div class="more-tabs"><svg width="20" height="16"><use href="#i-menu"/></svg></div></div>
    <div class="sw-top"><div class="fillstroke"><svg width="36" height="36"><use href="#i-none"/></svg><b></b></div>
      <div class="toggle"><svg width="44" height="42" viewBox="0 0 44 42"><path d="M11 11h22M11 18h22M11 25h22M11 32h22" stroke="#bdbdbd" stroke-width="4"/></svg><svg class="on" width="44" height="42" viewBox="0 0 44 42"><path d="M9 8h8v8H9zM18.500 8h8v8h-8zM28 8h8v8h-8zM9 17.500h8v8H9zM18.500 17.500h8v8h-8zM28 17.500h8v8h-8zM9 27h8v8H9zM18.500 27h8v8h-8zM28 27h8v8h-8z" fill="#fff"/></svg></div></div>
    <div class="sw-mid">
      <div class="grid">
        <i class="none"></i><i class="reg"></i><i style="background:#fff"></i><i class="cur"></i><i style="background:#f00"></i><i style="background:#ff0"></i><i style="background:#0f0"></i><i style="background:#0ff"></i><i style="background:#00f"></i><i style="background:#f0f"></i><i style="background:#bb2228"></i><i style="background:#ea1a24"></i><i style="background:#f0501f"></i><i style="background:#f88b1a"></i><i style="background:#fba731"></i>
        <i style="background:#fbe81d"></i><i style="background:#d3dc1f"></i><i style="background:#84c037"></i><i style="background:#37ae44"></i><i style="background:#04893a"></i><i style="background:#045f2d"></i><i style="background:#20ab6c"></i><i style="background:#049f92"></i><i style="background:#27a3df"></i><i style="background:#0468b3"></i><i style="background:#2a2a86"></i><i style="background:#1b1356"></i><i style="background:#5e2685"></i><i style="background:#8a2183"></i><i style="background:#95034f"></i>
        <i style="background:#cf1254"></i><i style="background:#ea1a74"></i><i style="background:#bfa98c"></i><i style="background:#907d6d"></i><i style="background:#68564a"></i><i style="background:#4b3d35"></i><i style="background:#be9060"></i><i style="background:#9d7146"></i><i style="background:#815630"></i><i style="background:#68431d"></i><i style="background:#522e13"></i><i style="background:#3b1d0d"></i><i style="background:linear-gradient(90deg,#fff,#000)"></i><i style="background:linear-gradient(90deg,#cfeafc,#0a7cc7)"></i><i style="background:linear-gradient(90deg,#f76fa8,#eee)"></i>
        <i style="background:radial-gradient(#fff0c8,#f7871e)"></i><i style="background:repeating-conic-gradient(#d9ce9d 0 25%,#fff 0 50%) 0 0/8px 8px"></i><i style="background:linear-gradient(120deg,#1f4f84,#6fa0cc,#1f4f84)"></i><i style="background:linear-gradient(120deg,#7fc0b0,#e0dc8c,#8ab)"></i><i class="k" style="background-color:#1d7fc0"></i><i class="k" style="background-color:#000"></i><i class="k" style="background-color:#54b515"></i><i class="k" style="background-color:#808285"></i><i class="k" style="background-color:#e6992e"></i><i class="k" style="background-color:#e6992e"></i><i class="k" style="background-color:#4f96d8"></i><i class="k" style="background-color:#1d7fc0"></i><i class="k" style="background-color:#606265"></i>
      </div>
      <div class="scroll"><svg width="16" height="12" viewBox="0 0 16 12"><path d="M2 10l6-7 6 7" fill="none" stroke="currentColor" stroke-width="2.400"/></svg><svg width="16" height="12"><use href="#i-chev"/></svg></div>
    </div>
    <svg class="sw-foot" width="452" height="38" viewBox="0 0 452 38" fill="#bdbdbd"><path d="M22 9h4v20h-4zM28 9h4v20h-4zM34 10l3-1 6 19-3 1zM46 26h5l-2.500 3z"/><path d="M83 14a7 7 0 1 0 0 11" fill="none" stroke="#bdbdbd" stroke-width="2"/><circle cx="79" cy="20" r="3"/><circle cx="90" cy="11" r="3"/><circle cx="90" cy="28" r="3"/><path d="M84 15l6-4M84 24l6 4" stroke="#bdbdbd" stroke-width="1.500"/><path d="M127 28a6 6 0 0 1 1-11 8 8 0 0 1 15-3 7 7 0 0 1 2 14z"/><path d="M115 23h10M121 18l5 5-5 5" fill="none" stroke="#bdbdbd" stroke-width="2"/><path d="M181 9h19v20h-19zM204 26h6l-3 4z"/><path d="M184 12h3v4h-3zM189 12h3v4h-3zM195 12h3v4h-3zM184 18h3v4h-3zM189 18h3v4h-3zM184 24h3v3h-3zM189 24h3v3h-3z" fill="#484848"/><path d="M233 10h19v18h-19zM236 16h14M236 20h14M236 24h14" fill="none" stroke="#bdbdbd" stroke-width="2"/><path d="M278 11h10l3 4h12v13h-25zM331 10h19v18h-9v-9h-10zM331 21h8v8z"/><path d="M378 13h21M385 12V9h7v3M381 14l1 15h13l1-15M386 16v10M391 16v10" fill="none" stroke="#bdbdbd" stroke-width="2"/></svg>
    <div class="pgrip"><i class="grip"></i></div>
  </section>

  <section class="panel color">
    <div class="phead"><svg width="14" height="14"><use href="#i-x"/></svg><svg width="16" height="11"><use href="#i-ll"/></svg></div>
    <div class="ptabs"><span class="on"><svg width="12" height="20"><use href="#i-updown"/></svg>Color</span><div class="more-tabs"><svg width="20" height="16"><use href="#i-menu"/></svg></div></div>
    <div class="mix">
      <div class="mix-left"><div class="swaprow"><svg width="24" height="24"><use href="#i-default"/></svg><svg width="22" height="22"><use href="#i-swap"/></svg></div><div class="fillstroke"><svg width="36" height="36"><use href="#i-none"/></svg><b></b></div></div>
      <div class="sliders">
        <div><label>C</label><span class="track c"><i style="margin-left:147px"></i></span><output>74.97</output>%</div>
        <div><label>M</label><span class="track m"><i style="margin-left:133px"></i></span><output>67.92</output>%</div>
        <div><label>Y</label><span class="track y"><i style="margin-left:131px"></i></span><output>67.05</output>%</div>
        <div><label>K</label><span class="track k"><i style="margin-left:180px"></i></span><output>90.15</output>%</div>
      </div>
    </div>
    <div class="nbw"><i></i><i></i><i></i></div>
    <div class="spectrum"></div>
    <div class="pgrip"><i class="grip"></i></div>
  </section>

  <section class="reminder">
    <header><div class="lights pale"><i></i><i></i><i></i></div><h2>1 Reminder</h2></header>
    <div class="rbody">
      <svg width="48" height="48" viewBox="0 0 48 48"><path d="M1 1h46v46H1z" fill="#fff" stroke="#2a4a68" stroke-width="1.500"/><path d="M2 2h44v8H2z" fill="#8a8a8a"/><path d="M10 10v36M19 10v36M28 10v36M37 10v36M2 19h44M2 28h44M2 37h44" stroke="#c8c8c8" stroke-width="1.500"/><path d="M10 19h9v9h-9z" fill="#fff" stroke="#d33" stroke-width="2"/></svg>
      <div><h3>FW: F5443 UX Design for feature</h3><p>Skype Meeting</p><p>In 10 minutes</p></div>
    </div>
    <footer><button class="join">Join Online</button><span class="split"><button>Snooze</button><button class="dd">▼</button></span><span class="split"><button>Dismiss</button><button class="dd">▼</button></span></footer>
  </section>

  <section class="notice">
    <svg width="56" height="60"><use href="#reminders"/></svg>
    <div class="ntext"><strong>7/22/19 - Follow up on features with...</strong><span>50 minutes ago</span></div>
    <div class="nact"><span>Complete</span><span>Later</span></div>
  </section>

  <nav class="dock">
    <span class="run"><svg viewBox="0 0 80 80"><path d="M5 6h70v67H5z" fill="#e8eff8"/><path d="M5 6h36Q34 26 35 45h9q-1 15 3 28H5z" fill="url(#g-blue)"/><path d="M25 23v8M57 23v8" stroke="#15314f" stroke-width="3"/><path d="M19 49q21 19 43 0" fill="none" stroke="#15314f" stroke-width="3"/></svg></span>
    <span><svg viewBox="0 0 80 80"><path d="M4 4h72v71H4z" fill="url(#g-gray)"/><circle cx="40" cy="39" r="28" fill="#333"/><circle cx="40" cy="39" r="24" fill="none" stroke="#b5b5b0" stroke-width="6" stroke-dasharray="3 2"/><circle cx="40" cy="39" r="20" fill="none" stroke="#b5b5b0" stroke-width="4"/><path d="M40 39h20M40 39L28 22M40 39L28 57" stroke="#b5b5b0" stroke-width="5"/></svg></span>
    <span><svg viewBox="0 0 80 80"><circle cx="40" cy="40" r="36" fill="#d8d8de"/><circle cx="40" cy="40" r="33.500" fill="url(#g-siri)"/><path d="M14 56q20-6 26-18 10 14 26 10-14 4-26-10 0 20 8 32M40 38Q26 28 13 30M40 38q4-14 16-22" fill="none" stroke="#8ff" stroke-width="3" opacity=".8"/><path d="M40 38q1 18 7 32" fill="none" stroke="#f6a6e6" stroke-width="4"/><circle cx="40" cy="38" r="15" fill="url(#g-glow)"/></svg></span>
    <span class="run"><svg viewBox="0 0 80 80"><circle cx="40" cy="40" r="36" fill="#ddd"/><circle cx="40" cy="40" r="33" fill="url(#g-blue)"/><circle cx="40" cy="40" r="30" fill="none" stroke="#cfeaff" stroke-width="4" stroke-dasharray="1 4"/><path d="M61 17L36 36l8 8z" fill="#e33c33"/><path d="M20 62l16-26 8 8z" fill="#e8e8e8"/></svg></span>
    <span><svg viewBox="0 0 80 80"><circle cx="40" cy="40" r="36" fill="url(#g-gray)"/><path d="M61 16q-22 4-32 22l-13 6-2 8 9-1 6 8-4 9 9-6 7-13q18-12 20-33z" fill="#444"/><circle cx="49" cy="31" r="5" fill="#bbb"/><path d="M22 56q-7 4-6 13 6-2 9-8z" fill="#555"/></svg></span>
    <span class="wide"><svg viewBox="0 0 86 84"><circle cx="43" cy="30" r="29" fill="#0a66ad"/><circle cx="43" cy="30" r="25" fill="none" stroke="#fff" stroke-width="2.500" stroke-dasharray="30 9"/><text x="43" y="41" text-anchor="middle" class="ge" textLength="36">GE</text><rect x="1" y="60" width="84" height="20" rx="2" fill="#1466ac"/><text x="43" y="75" text-anchor="middle" class="appm" textLength="77">AppMarket</text></svg></span>
    <span><svg viewBox="0 0 80 80"><path d="M6 5L64-2l9 70-56 10z" fill="#b4b4b4" stroke="#777"/><path d="M6 5L64-2l2 16L8 21z" fill="#2c2c2c"/><path d="M55 15l11-1 7 54-12 3z" fill="#f07a16"/><path d="M25 19l9 56M40 17l9 56M9 35l58-8M11 49l58-8M13 63l58-8" stroke="#8a8a8a" stroke-width="1.500"/></svg></span>
    <span><svg viewBox="0 0 80 80"><circle cx="40" cy="40" r="39" fill="#fdd04b"/><path d="M6 21A39 39 0 0 1 74 20H40L24 50z" fill="#d94c3d"/><path d="M6 21l17 29a20 20 0 0 0 27 8L37 79A39 39 0 0 1 6 21z" fill="#239a55"/><circle cx="40" cy="39" r="18" fill="#fff"/><circle cx="40" cy="39" r="14.500" fill="#4a80ee"/></svg></span>
    <span class="run"><svg viewBox="0 0 80 80"><path d="M20 2q8-3 16 3 34-1 38 35 7 14 2 26-8 15-26 11Q14 78 8 42-1 28 5 14 10 4 20 2z" fill="#0b6da3"/><path d="M21 7q8-2 14 3 31-1 34 31 6 12 2 22-7 12-21 8Q17 72 13 40 5 28 9 17q4-8 12-10z" fill="#fff"/><text x="40" y="62" text-anchor="middle" class="skype">S</text></svg></span>
    <span class="run"><svg viewBox="0 0 80 80"><path d="M46 26h33v34H46z" fill="#fff" stroke="#bbb"/><path d="M46 34l9 9 24-19" fill="none" stroke="#222" stroke-width="3"/><path d="M2 9L47 2v75L2 70z" fill="#1a75cf"/><ellipse cx="22" cy="40" rx="10" ry="13" fill="none" stroke="#cde9fb" stroke-width="5"/></svg><em>8</em></span>
    <span class="run"><svg viewBox="0 0 80 80"><path d="M6 10L64 1l9 69-55 9z" fill="#fff" stroke="#c9a93a"/><path d="M6 10L64 1l2 12L8 24z" fill="#f8cb34"/><path d="M9 34l58-8M10 42l58-8M11 50l58-8M12 58l58-8M13 66l58-8" stroke="#ccc"/></svg></span>
    <span class="run"><svg viewBox="0 0 80 80"><use href="#reminders"/></svg><em>3</em></span>
    <span class="run"><svg viewBox="0 0 80 80"><path d="M40 4v71Q18 70 12 46q-2-32 28-42z" fill="#0e95f5"/><path d="M12 37q0-26 28-33v34z" fill="#e3f764"/><path d="M16 22Q24 8 42 4l-2 22z" fill="#fb3b88"/><path d="M12 50q14-10 28-8v-8l-28 2z" fill="#d8f85a"/><path d="M12 48q14-10 28-6v8l-26 2z" fill="#53e8f0"/><path d="M40 74V22q2-16 20-16v12q-8 0-8 9h10v10H52v37z" fill="#2b2745"/></svg><em>2</em></span>
    <span><svg viewBox="0 0 80 80"><circle cx="40" cy="40" r="34" fill="#fff" stroke="#333" stroke-width="4"/><path d="M20 47q20 22 40 0" fill="none" stroke="#222" stroke-width="4"/><circle cx="27" cy="32" r="3.500"/><circle cx="51" cy="32" r="3.500"/><path d="M40 3l14 8" stroke="#333" stroke-width="6"/></svg></span>
    <span class="run"><svg viewBox="0 0 82 82"><path d="M0-1h15v83H0z" fill="#9b10d0"/><path d="M21-1h61v83H21z" fill="url(#g-rp)"/><path d="M82-1v30L54 28zM21 60l33-32L82 82H21z" fill="#5d1a8e" opacity=".5"/><text x="51" y="74" text-anchor="middle" class="rp" textLength="46">RP</text></svg></span>
    <span class="run"><svg viewBox="0 0 80 80"><rect x="4" y="4" width="72" height="70" rx="10" fill="#2b0018" stroke="#f42bc0" stroke-width="4"/><text x="40" y="53" text-anchor="middle" class="adobe xd" textLength="46">Xd</text></svg></span>
    <span class="run"><svg viewBox="0 0 80 80"><path d="M4 4h72v69H4z" fill="#251300" stroke="#e2761b" stroke-width="4"/><text x="40" y="53" text-anchor="middle" class="adobe aii" textLength="37">Ai</text></svg></span>
    <span class="run"><svg viewBox="0 0 80 80"><path d="M4 4h72v69H4z" fill="#2a0e0e" stroke="#c8151c" stroke-width="4"/><path d="M18 60Q44 36 39 19q-4-6-6 0 2 20 26 32 6-4-1-6Q38 43 19 58z" fill="none" stroke="#fff" stroke-width="3"/></svg></span>
    <span class="run"><svg viewBox="0 0 80 80"><path d="M45 10h32v58H45z" fill="#fff" stroke="#ccc"/><path d="M49 22h24M49 32h24M49 42h24M49 52h24M49 61h24" stroke="#2f9060" stroke-width="7" stroke-dasharray="11 2"/><path d="M2 10L47 2v75L2 68z" fill="#217a48"/><text x="23" y="52" text-anchor="middle" class="off" textLength="20">X</text></svg></span>
    <span class="run"><svg viewBox="0 0 80 80"><path d="M45 12h32v54H45z" fill="#fff" stroke="#ccc"/><circle cx="58" cy="32" r="11" fill="#333"/><path d="M60 30V18q10 2 10 12z" fill="#d9543a"/><path d="M48 50h23M48 57h23" stroke="#c4705c" stroke-width="3"/><path d="M2 10L47 2v75L2 68z" fill="#df4a2c"/><text x="23" y="52" text-anchor="middle" class="off" textLength="18">P</text></svg></span>
    <span class="run"><svg viewBox="0 0 80 80"><path d="M45 10h32v58H45z" fill="#fff" stroke="#ccc"/><path d="M47 18h24M47 26h24M47 34h24M47 42h24M47 50h24M47 58h24" stroke="#333" stroke-width="3"/><path d="M2 10L47 2v75L2 68z" fill="#2a5cab"/><text x="23" y="52" text-anchor="middle" class="off" textLength="27">W</text></svg></span>
    <span class="run"><svg viewBox="0 0 80 80"><circle cx="41" cy="16" r="11" fill="#757ae8"/><circle cx="64" cy="18" r="7.500" fill="#4a52bd"/><path d="M50 29h26v22q0 10-12 10H50z" fill="#4a52bd"/><path d="M28 29h33v26q-4 16-19 16-14 0-18-16z" fill="#757ae8"/><rect x="3" y="20" width="36" height="38" rx="3" fill="#464bb5"/><text x="21" y="49" text-anchor="middle" class="tm">T</text></svg></span>
    <span class="run"><svg viewBox="0 0 80 80"><ellipse cx="40" cy="12" rx="13" ry="14" fill="none" stroke="#8a8a8a" stroke-width="4"/><path d="M34 44L16 74M40 44l-1 34M47 40l16 34" stroke="#777" stroke-width="6"/><circle cx="35" cy="36" r="14" fill="#a9b3b8"/><path d="M44 26q12-4 16 8 0 12-12 16z" fill="#b9c3c8"/><circle cx="40" cy="28" r="3" fill="#555"/></svg></span>
    <span class="run"><svg viewBox="0 0 80 80"><path d="M12 5h60v40H12z" fill="#a9823f"/><path d="M3 20l61-9 10 50-64 12z" fill="#fff"/><path d="M6 23l56-8 7 43-56 11z" fill="#5d95dc"/><path d="M9 44l56 2 4 12-56 11z" fill="#2f5a92"/><path d="M11 58q30-12 58-4v4l-56 11z" fill="#d8e4ea"/><path d="M50 58h28l-4 16q-10 4-20 0z" fill="#6d6658"/><circle cx="64" cy="50" r="15" fill="#aaa28f" stroke="#444" stroke-width="3"/></svg></span>
    <span class="run"><svg viewBox="0 0 80 80"><path d="M40 3c50 2 50 60 5 63-9 0-14-1-18-4-2 7-8 10-12 10 3-4 4-11 2-17C-10 35 8 4 40 3z" fill="#2794f7"/><path d="M54 36c30 0 32 32 12 38 1 3-1 4 1 6-4 0-7-3-9-5-30-1-31-38-4-39z" fill="#eef4fc"/><circle cx="44" cy="54" r="3.600" fill="#1c4f8a"/><circle cx="55" cy="54" r="3.600" fill="#1c4f8a"/><circle cx="67" cy="54" r="3.600" fill="#1c4f8a"/></svg></span>
    <span class="run"><svg viewBox="0 0 80 80"><circle cx="40" cy="40" r="37" fill="#f6f1f8" stroke="url(#g-note)" stroke-width="3.500"/><path d="M31 20l27-6v38a9 7 0 1 1-5-6V27l-17 4v28a9 7 0 1 1-5-7z" fill="url(#g-note)"/></svg></span>
    <span class="run"><svg viewBox="0 0 80 80"><path d="M4 8h72v63H4z" fill="#1d1d1d" stroke="#111" stroke-width="2"/><path d="M13 17l8 5-8 6M24 29h10" fill="none" stroke="#eee" stroke-width="3"/></svg></span>
    <span class="run"><svg viewBox="0 0 86 86"><circle cx="43" cy="43" r="42.500" fill="#e31d35"/><text x="43" y="72" text-anchor="middle" class="f5b" textLength="74">f5</text></svg></span>
    <i class="dsep"></i>
    <span><svg viewBox="0 0 80 80"><path d="M0 8h24l5 6h50v56H0z" fill="#61c3ee"/><path d="M0 21h79v49H0z" fill="#72d0f6"/><circle cx="39" cy="43" r="18" fill="#45a3cc"/><path d="M34 30h10v13h6L39 56 28 43h6z" fill="#72d0f6"/></svg></span>
    <span><svg viewBox="0 0 80 80"><path d="M10 12l60 0-8 60q-22 10-44 0z" fill="#d6d6d6" opacity=".95"/><ellipse cx="40" cy="11" rx="30" ry="6" fill="#aaa"/><path d="M13 9l9-10 10 6 9-6 9 7 10-4 7 9-14 7H24z" fill="#ececec"/><path d="M22 9l7-6 4 9zM46 12l8-8 4 9z" fill="#444"/><path d="M34 5l7 8-6 2z" fill="#3ab"/></svg></span>
  </nav>

  <section class="airplane">
    <svg width="88" height="86" viewBox="0 0 88 86"><path d="M26 1h10l20 34h22q9 3 9 8t-9 8H56L36 85H26l10-34H18L9 58H1l6-15-6-15h8l9 8h18z" fill="#fff"/></svg>
    Airplane mode on
  </section>
</main>
</body>
</html>
```
FILE: styles.css
```css
* { box-sizing: border-box; }
html, body { margin: 0; background: #000; }
body { font-family: "Open Sans", "Noto Sans", sans-serif; color: #e4e4e4; }
h1, h2, h3, p, ul { margin: 0; padding: 0; font-weight: inherit; }
svg { flex: none; display: block; }
i { font-style: normal; flex: none; }
.defs { position: absolute; }

.desktop {
  position: relative; width: 3840px; height: 2160px; overflow: hidden;
  clip-path: inset(68px 120px 68px 119px);
  background: linear-gradient(90deg, #3b2266 0, #432a70 2900px, #56308a 3200px, #4c3184 3840px);
}
.desktop > * { position: absolute; }

/* desktop files */
.shots { left: 3023px; top: 261px; width: 690px; display: grid; grid-template-columns: repeat(3, 229.500px); text-align: center; background: none; }
.shots p { font: 600 22.500px/29.500px Inter, sans-serif; letter-spacing: .1px; color: #fff; white-space: nowrap; text-shadow: 0 2px 4px rgba(0,0,0,.7); }
.thumb-top { left: 3315px; top: 145px; width: 109px; height: 6px; background: #eee; }
.thumb { left: 3315px; top: 355px; width: 82px; height: 14px; background: linear-gradient(#e3ae3c 5px, #d8d8d8 5px); border-top-right-radius: 14px; }
.back-window { left: 3070px; top: 240px; width: 31px; height: 140px; background: linear-gradient(#ececec 45px, #b4b4b4 46px); }

/* menu bar */
.menubar { left: 119px; top: 68px; width: 3601px; height: 43px; display: flex; align-items: center; background: #dcd2eb; border-bottom: 2px solid #b3a3ca; font: 500 24px/42px Inter, sans-serif; color: #231a2c; }
.apple { width: 26px; height: 30px; margin-left: 39px; margin-top: -2px; }
.menubar nav { display: grid; grid-template-columns: 163px 77px 80px 116px 92px 111px 107px 94px 131px 80px; margin: 1px 0 0 38px; white-space: nowrap; }
.menubar nav b { font-weight: 700; font-size: 25px; letter-spacing: 1px; }
.menubar .status { margin-left: auto; margin-right: 1px; overflow: visible; }
.mb { font: 500 24px Inter, sans-serif; fill: #231a2c; }
.f5s { font: bold 31px "Liberation Serif", serif; fill: #fff; }
.bs { font: bold 33px Inter, sans-serif; fill: #231a2c; }
.ges { font: italic bold 17px "Liberation Serif", serif; fill: #231a2c; }

/* preview window */
.lights { display: flex; gap: 16px; }
.lights i { width: 22px; height: 22px; border-radius: 50%; }
.lights.pale i { background: #dadada; border: 1px solid #c6c6c6; }
.lights .r { background: radial-gradient(#3b0a0a 4px, #fc5650 5px); }
.lights .y { background: #fdb429; }
.lights .g { background: #29c73f; }
.preview { left: 128px; top: 119px; width: 2952px; height: 270px; background: #f5f5f3; border-radius: 12px 12px 0 0; display: flex; flex-direction: column; overflow: hidden; }
.preview > .lights { position: absolute; left: 14px; top: 10px; }
.preview-title { height: 46px; flex: none; display: flex; justify-content: center; align-items: center; gap: 8px; padding-left: 18px; font: 400 23.500px/44px Inter, sans-serif; color: #8d8d8d; }
.preview-title svg { margin-bottom: 2px; }
.preview-tools { height: 44px; flex: none; margin: 0 0 13px 12px; display: flex; color: #777; }
.pbtn { display: flex; align-items: center; justify-content: center; border: 2px solid #dcdcda; border-radius: 8px; background: #fbfbfa; flex: none; }
.w78 { width: 78px; margin-right: 13px; } .w75 { width: 75px; } .join { margin-right: 13px; }
.w60 { width: 60px; border-radius: 8px 0 0 8px; } .w46 { width: 47px; margin-left: -2px; border-radius: 0 8px 8px 0; }
.gap { width: 1832px; flex: none; }
.ml { margin-left: 14px; }
.psearch { margin-left: 14px; flex: none; width: 450px; display: flex; align-items: center; padding-left: 152px; gap: 10px; border: 2px solid #dcdcda; border-radius: 8px; background: #fdfdfd; font: 400 23px Inter, sans-serif; letter-spacing: -.6px; color: #b4b4b4; }
.preview-body { flex: 1; min-height: 0; background: #242524; padding: 50px 22px 0 78px; border-top: 2px solid #4a4a4a; }
.sheet { font: 400 40px Lato, Carlito, sans-serif; color: #444b52; filter: blur(.7px); overflow: hidden; }
.sheet-head { display: grid; grid-template-columns: 335px 2114px 211px 190px; height: 62px; background: #d2d8de; border-top: 3px solid #9aa; border-bottom: 4px solid #444; line-height: 64px; }
.sheet-head span { border-left: 3px solid #333; padding-left: 8px; white-space: nowrap; overflow: hidden; }
.sheet-head span:first-child { border: 0; }
.sheet-head span:nth-child(2) { text-align: center; padding: 0 7px 0 0; letter-spacing: .7px; }
.sheet-head span:nth-child(4) { padding-left: 5px; }
.sheet-row { display: grid; grid-template-columns: 335px repeat(10, 211.400px) 211px 190px; height: 60px; background: #fbfbfb; line-height: 58px; font-size: 36px; letter-spacing: -1.900px; }
.sheet-row span { border-left: 3px solid #333; padding-left: 6px; white-space: nowrap; overflow: hidden; }
.sheet-row span:first-child { border: 0; padding-left: 8px; }
.sheet-row .post { background: linear-gradient(135deg, #107c1c 12px, #fbfa0c 13px); }

/* illustrator window */
.ai { left: 119px; top: 367px; width: 3601px; height: 1725px; border-radius: 14px 14px 0 0; background: #484848; display: flex; flex-direction: column; overflow: hidden; box-shadow: 0 -2px 4px rgba(0,0,0,.5); }
.ai-title { height: 64px; flex: none; display: flex; align-items: center; background: #4a4a4a; position: relative; padding-left: 18px; padding-top: 3px; color: #d8d8d8; }
.ai-title h1 { position: absolute; left: 0; right: 0; text-align: center; padding-right: 284px; font: 400 23px/56px "Open Sans", sans-serif; letter-spacing: .4px; color: #d0d0d0; top: 4px; }
.home { margin-left: 23px; margin-top: -2px; } .arrange { margin: -10px 0 0 14px; } .ac { margin: -7px 0 0 15px; }
.vsep { width: 2px; height: 38px; background: #3c3c3c; margin-left: 17px; }
.ac ~ .vsep { margin-left: auto; }
.ess { margin-left: 25px; margin-right: 20px; font: 700 22.500px/60px "Open Sans", sans-serif; letter-spacing: .35px; color: #eee; }
.ac ~ .vsep.s2 { margin-left: 28px; }
.stock { margin: 0 12px 0 11px; width: 348px; height: 37px; border: 2px solid #3a3a3a; background: #3f3f3f; border-radius: 4px; display: flex; align-items: center; gap: 12px; padding-left: 4px; font-size: 21px; color: #7c7c7c; white-space: nowrap; }
.ai-main { flex: 1; display: flex; min-height: 0; }

.grip { display: block; width: 37px; height: 8px; background: repeating-linear-gradient(90deg, #2e2e2e 0 2px, transparent 2px 4px); }
.tools { width: 77px; flex: none; border-top: 2px solid #333; border-right: 5px solid #353535; color: #bdbdbd; display: flex; flex-direction: column; }
.tools + .tools { width: 80px; border-right-width: 5px; }
.tools-head { height: 22px; background: #3f3f3f; border-bottom: 2px solid #363636; padding: 4px 0 0 10px; color: #ccc; flex: none; }
.tools .grip { margin: 7px 0 24px 20px; flex: none; }
.tools ul { list-style: none; }
.tools li { width: 53px; height: 41px; margin: 0 0 4px 12px; display: flex; align-items: center; justify-content: center; position: relative; border-radius: 4px; }
.tools li svg { width: 40px; height: 34px; }
.tools li.on { background: #292929; }
.tools li.more::after { content: ""; position: absolute; right: 0; bottom: 1px; border-left: 7px solid transparent; border-bottom: 6px solid #c4c4c4; }
.swaprow { display: flex; justify-content: space-between; width: 61px; margin: 10px 0 0 10px; align-items: center; }
.fillstroke { position: relative; width: 54px; height: 54px; margin: 10px 0 0 12px; flex: none; }
.fillstroke b { position: absolute; left: 0; top: 0; width: 36px; height: 36px; background: #000; border: 3px solid #e6e6e6; outline: 1px solid #222; }
.fillstroke svg { margin: 18px 0 0 18px; }
.trio { display: flex; margin: 13px 0 0 12px; height: 18px; width: 53px; border: 1px solid #222; flex: none; }
.trio i { flex: 1; } .trio i:nth-child(1) { background: #000; } .trio i:nth-child(2) { background: linear-gradient(90deg, #fff, #333); }
.trio i:nth-child(3), .nbw i:first-child, .grid .none { background: linear-gradient(to bottom right, #fff 43%, #e21a1f 44% 56%, #fff 57%); }
.modes { display: flex; flex-direction: column; align-items: center; width: 77px; }
.modes svg:nth-child(1) { margin-top: 15px; } .modes svg:nth-child(2) { margin-top: 20px; } .modes svg:nth-child(3) { margin-top: 38px; }

.doc { width: 2867px; flex: none; background: #434343; }
.tabs { height: 56px; background: #3b3b3b; border-top: 2px solid #333; border-bottom: 2px solid #333; display: flex; }
.tab { width: 522px; display: flex; align-items: center; gap: 17px; padding-left: 14px; background: #4a4a4a; border-right: 2px solid #333; color: #d8d8d8; }
.tab em { font: 700 19px/50px "Open Sans", sans-serif; white-space: nowrap; letter-spacing: .06px; color: #ececec; }
.tab + .tab { width: 495px; background: #3e3e3e; color: #999; padding-left: 16px; gap: 18px; }
.tab + .tab em { color: #a2a2a2; letter-spacing: .12px; }
.canvas { width: 2833px; height: 1606px; background: #fff; position: relative; }
.artwork { position: absolute; left: -276px; top: -487px; width: 3109px; height: 2092px; color: #111; }
.artwork > * { position: absolute; }
.guides { left: 799px; top: 704px; height: 786px; display: grid; grid-template-columns: repeat(9, 187.150px); }
.guides i { border-left: 2px solid #bcbcbc; }
.hours { left: 776px; top: 669px; height: 28px; display: grid; grid-template-columns: repeat(33, 46.790px); justify-items: center; align-items: center; line-height: 28px; }
.hours span { font-size: 24px; color: #8b8b8b; transform: translate(4px, 0) rotate(-55deg); font-weight: 400; }
.hours b { font-size: 28.500px; font-weight: 700; transform: translate(13px, -24px) rotate(-55deg); white-space: nowrap; }
.sched { left: 446px; top: 724px; width: 1881px; height: 35px; border-bottom: 3px solid #c6c6c6; display: flex; font-weight: 700; font-size: 24px; line-height: 32px; }
.sched .label { width: 333px; display: flex; justify-content: flex-end; gap: 4px; align-items: center; letter-spacing: .35px; white-space: nowrap; }
.counts { margin-left: 8px; display: grid; grid-template-columns: repeat(32, 46.790px); }
.counts span { width: 46px; text-align: center; font-weight: 600; font-size: 24px; line-height: 35px; }
.cover { left: 446px; top: 756px; height: 82px; display: flex; font-size: 24px; font-weight: 600; }
.labels { width: 333px; display: flex; flex-direction: column; text-align: right; font-weight: 700; line-height: 39px; padding-top: 2px; white-space: nowrap; letter-spacing: .78px; }
.periods { margin-left: 19px; border: solid #333; border-width: 4px 3px 3px; background: #efefef; display: grid; grid-template-columns: 299px 148.500px 150.500px 299px 227px 148px 150px 77px; }
.periods div { display: flex; flex-direction: column; align-items: center; line-height: 38.500px; border-right: 3px solid #333; margin-top: -1px; }
.periods div:last-child { border: 0; }
.periods span { letter-spacing: .65px; white-space: nowrap; }
.periods .neg { color: #e9a23b; }
.periods .a { margin-left: -4px; } .periods .b { margin-left: -18px; } .periods .c5 { margin-left: 6px; }
.periods .right { padding-left: 7px; }
.nudge { margin-left: -18px; }
.baseline { background: linear-gradient(#4a78f0, #4a78f0) 50% 28px/100% 2px no-repeat, linear-gradient(#4a78f0, #4a78f0) 60% 26px/8px 8px no-repeat; }
.draft { left: 1148px; top: 1108px; font-weight: 350; font-size: 153px; line-height: 220px; color: #000; -webkit-text-stroke: .8px #000; }
.cursor { left: 1353px; top: 823px; }

.dockcol { width: 377px; border-left: 2px solid #333; flex: none; }
.dockcol.b { width: 200px; border-left: 5px solid #343434; }
.dock-head { height: 24px; background: #3c3c3c; border-top: 2px solid #333; border-bottom: 2px solid #343434; color: #ccc; padding: 4px 13px 0; display: flex; justify-content: flex-end; }
.dock-body { border-bottom: 2px solid #333; height: 182px; padding: 7px 0 0 10px; }
.dock-body .grip { margin: 0 auto 9px; position: relative; }
.dock-body p { width: 353px; height: 42px; margin-bottom: 11px; display: flex; align-items: center; padding-left: 9px; gap: 16px; font-weight: 700; font-size: 19px; letter-spacing: 0; color: #ececec; border-radius: 3px; }
.dock-body p svg { color: #c2c2c2; width: 34px; height: 34px; }
.dock-body p.on { background: #2e2e2e; border: 1px solid #5a5a5a; padding-left: 8px; }
.b .dock-body p { width: 180px; padding-left: 5px; gap: 17px; }
.b .dock-body .lib { padding-left: 3px; gap: 15px; }
.b .dock-body .lib svg { width: 38px; height: 34px; }
.b .dock-body .grip { left: -4px; }

/* floating panels */
.panel { background: #484848; box-shadow: 0 6px 14px rgba(0,0,0,.3), 0 0 0 1px #333; display: flex; flex-direction: column; }
.ptabs { background: #3a3a3a; height: 51px; flex: none; display: flex; font-weight: 700; font-size: 19px; color: #a6a6a6; line-height: 50px; border-bottom: 2px solid #343434; white-space: nowrap; }
.ptabs span { border-right: 2px solid #333; display: flex; align-items: center; padding-left: 17px; }
.ptabs .on { background: #484848; color: #ececec; margin-bottom: -2px; }
.more-tabs { margin-left: auto; display: flex; gap: 13px; align-items: center; padding-right: 12px; color: #a8a8a8; }
.more-tabs i { width: 2px; height: 20px; background: #999; }
.phead { height: 26px; flex: none; background: #3b3b3b; border-bottom: 2px solid #333; display: flex; justify-content: space-between; align-items: center; padding: 0 11px 0 9px; color: #c8c8c8; border-radius: 8px 8px 0 0; }
.pgrip { height: 15px; border-top: 4px solid #333; padding-top: 3px; margin-top: auto; }
.pgrip .grip { margin: 0 auto; height: 7px; }

.align { left: 2690px; top: 450px; width: 452px; height: 383px; border-top: 7px solid #303030; overflow: hidden; }
.align .ptabs { line-height: 48px; }
.align .ptabs span:nth-child(1) { width: 119px; padding-left: 18px; } .align .ptabs .on { width: 93px; padding-left: 8px; gap: 7px; } .align .ptabs span:nth-child(3) { width: 119px; padding-left: 15px; }
.align .tr { overflow: hidden; }
.group { height: 109px; margin: 0 12px 0 10px; border-bottom: 3px solid #404040; padding-top: 12px; color: #d4d4d4; }
.group h2 { font-size: 19.500px; line-height: 28px; height: 43px; letter-spacing: -.1px; white-space: nowrap; }
.icons { display: flex; color: #bdbdbd; padding-left: 6px; }
.icons svg { width: 34px; height: 36px; margin-right: 35px; margin-top: -2px; flex: none; }
.icons svg.far { margin-left: 41px; }
.last { border: 0; display: flex; justify-content: space-between; }
.last .sp { width: 313px; border-right: 2px solid #404040; height: 88px; }
.last h2 { height: 45px; }
.sp svg { margin-right: 26px !important; }
.pt { display: flex; align-items: center; gap: 10px; width: 159px; height: 40px; margin: -5px 0 0 -10px; padding-left: 11px; background: #4d4d4d; color: #626262; font-size: 19px; }
.pt svg { margin: 0 !important; width: 12px !important; }
.to svg { margin: -4px 0 0 10px; color: #bdbdbd; }

.swatches { left: 3080px; top: 787px; width: 451px; height: 304px; border-radius: 8px 8px 0 0; }
.swatches .ptabs span:nth-child(1) { width: 123px; } .swatches .ptabs span:nth-child(2) { width: 110px; } .swatches .ptabs span:nth-child(3) { width: 114px; }
.sw-top { display: flex; justify-content: space-between; height: 78px; padding-right: 11px; flex: none; }
.sw-top .fillstroke { margin: 12px 0 0 11px; }
.toggle { margin-top: 12px; height: 42px; display: flex; border: 1px solid #5a5a5a; border-radius: 4px; overflow: hidden; }
.toggle .on { background: #292929; }
.sw-mid { display: flex; height: 95px; padding-left: 11px; flex: none; }
.grid { display: grid; grid-template-columns: repeat(15, 24.500px); grid-auto-rows: 24.500px; gap: 1.700px; height: 95px; overflow: hidden; }
.grid .reg { background: radial-gradient(circle, #fff 2px, #777 3px, #fff 5px, #fff 7px, #777 8px, #fff 10px); }
.grid .cur { background: #000; border: 1.500px solid #fff; outline: 1px solid #000; outline-offset: -2px; }
.grid .k { background-image: linear-gradient(135deg, transparent 60%, #000 61% 74%, #fff 75%); background-size: 100% 17px; background-repeat: no-repeat; }
.scroll { margin-left: 13px; width: 24px; background: #444; border: 1px solid #525252; display: flex; flex-direction: column; justify-content: space-between; align-items: center; padding: 6px 0; color: #9a9a9a; }
.sw-foot { width: 451px; margin-top: -1px; }

.layers { left: 3054px; top: 1091px; width: 680px; height: 785px; }
.lh { height: 76px; background: linear-gradient(#363636 24px, #2f2f2f 24px 26px, #3a3a3a 26px); border-bottom: 2px solid #333; }
.lrows { margin: 0 0 0 11px; border: solid #545454; border-width: 0 0 2px 2px; height: 656px; padding-top: 12px; }
.lrows i { display: block; height: 36px; border-top: 2px solid #5a5a5a; }
.lrows .sel { background: #435b77; height: 35px; border: 0; }
.lfoot { display: flex; align-items: center; height: 37px; padding: 0 20px 0 22px; gap: 29px; }
.lfoot span { flex: 1; }
.layers .pgrip .grip { margin-left: 362px; }

.color { left: 3253px; top: 1329px; width: 465px; height: 405px; }
.color .phead { height: 24px; }
.color .ptabs .on { width: 96px; padding-left: 8px; gap: 8px; }
.mix { display: flex; height: 213px; padding: 0 0 0 11px; flex: none; }
.mix-left { width: 80px; }
.mix-left .swaprow { margin: 11px 0 0; width: 58px; }
.mix-left .fillstroke { margin: 8px 0 0; }
.sliders { padding-top: 13px; }
.sliders div { height: 46.900px; display: flex; align-items: center; font-size: 19px; color: #c4c4c4; }
.sliders label { width: 42px; padding-left: 7px; }
.track { width: 209px; height: 8px; margin-top: -10px; }
.track i { display: block; width: 17px; height: 15px; background: #c0c0c0; position: relative; top: 8px; clip-path: polygon(50% 0, 100% 45%, 100% 100%, 0 100%, 0 45%); }
.c { background: linear-gradient(90deg, #4a0c06, #000 70%); } .m { background: linear-gradient(90deg, #06301c, #000 70%); }
.y { background: linear-gradient(90deg, #060630, #000 70%); } .k.track { background: linear-gradient(90deg, #5a5a5a, #000 90%); }
.sliders output { width: 65px; height: 37px; margin: -3px 4px 0 16px; border: 1px solid #565656; background: #3d3d3d; border-radius: 3px; color: #eaeaea; font-size: 20px; line-height: 31px; text-align: center; }
.nbw { display: flex; margin: 2px 0 0 11px; width: 73px; height: 25px; border: 1px solid #222; flex: none; }
.nbw i { flex: 1; background: #fff; } .nbw i:nth-child(2) { background: #000; }
.spectrum { margin: 19px 0 0 11px; width: 422px; height: 43px; flex: none; border: 2px solid #222; background: linear-gradient(180deg, #fff 0, rgba(255,255,255,0) 45%, rgba(0,0,0,0) 55%, #111 100%), linear-gradient(90deg, #ee2024, #fcee1d 17%, #56b633 35%, #43c0e8 52%, #2c3f9c 67%, #b03a96 83%, #ee1478 92%, #ee2024); }

/* outlook reminder */
.reminder { left: 2949px; top: 1092px; width: 675px; height: 244px; border-radius: 10px; overflow: hidden; background: #f4f4f3; font-family: Inter, sans-serif; box-shadow: 0 0 0 1px rgba(0,0,0,.3); filter: drop-shadow(0 20px 26px rgba(0,0,0,.4)); }
.reminder header { height: 42px; display: flex; align-items: center; border-bottom: 1px solid #ccc; padding-left: 16px; }
.reminder h2 { font-size: 23px; letter-spacing: .2px; color: #a5a5a5; margin: 2px 0 0 162px; }
.rbody { height: 142px; background: linear-gradient(#2f83cc, #1873c5); display: flex; padding: 32px 0 0 27px; gap: 28px; color: #fff; }
.rbody h3 { font-size: 29px; line-height: 36px; margin-top: -16px; white-space: nowrap; letter-spacing: -.05px; }
.rbody p { font-size: 22.500px; line-height: 32.500px; letter-spacing: -.1px; }
.rbody h3 + p { margin-top: 2px; }
.reminder footer { border-top: 9px solid #e6e6e5; height: 60px; padding: 5px 25px 0 19px; display: flex; gap: 19px; }
.reminder button { font: 400 22.500px/34px Inter, sans-serif; letter-spacing: -.3px; padding: 0; color: #3c3c3c; border: 2px solid #b9b9b9; border-radius: 7px; background: linear-gradient(#fff, #e9e9e9); height: 38px; width: 102px; }
.reminder .join { width: 176px; margin-right: auto; }
.split { display: flex; }
.split button:first-child { border-radius: 7px 0 0 7px; }
.split .dd { width: 25px; margin-left: -2px; font-size: 10px; border-radius: 0 7px 7px 0; color: #555; }

/* notification */
.notice { left: 3037px; top: 148px; width: 645px; height: 118px; border-radius: 18px; background: linear-gradient(90deg, #e6e3ea, #e0d8ec 40%, #e3d9ee); box-shadow: 0 2px 10px rgba(0,0,0,.35); display: flex; font-family: Inter, sans-serif; color: #3d3842; overflow: hidden; }
.notice > svg { margin: 27px 0 0 19px; }
.ntext { margin-left: 21px; width: 417px; padding-top: 27px; display: flex; flex-direction: column; white-space: nowrap; }
.ntext strong { font-weight: 500; font-size: 22.500px; line-height: 32px; letter-spacing: .05px; }
.ntext span { font-size: 21px; line-height: 32px; letter-spacing: .1px; font-weight: 500; }
.nact { flex: 1; border-left: 2px solid #c6bcd2; display: grid; grid-template-rows: 58px 59px; text-align: center; font-size: 22.500px; }
.nact span { line-height: 61px; letter-spacing: .1px; }
.nact span:last-child { line-height: 64px; }
.nact span:first-child { border-bottom: 2px solid #c6bcd2; }

/* dock */
.dock { left: 544px; top: 1986px; width: 2752px; height: 110px; border-radius: 10px 10px 0 0; border-top: 2px solid #d4d4d4; background: linear-gradient(90deg, #ededec 2460px, #c4c4c4 2520px, #8c8c8c 2600px, #7a7a7a); box-shadow: 0 0 90px rgba(0,0,0,.12); display: flex; padding: 10px 0 0 5px; }
.dock span { width: 90px; flex: none; position: relative; display: flex; flex-direction: column; align-items: center; }
.dock svg { width: 80px; height: 80px; overflow: visible; }
.dock .wide svg { width: 86px; height: 84px; }
.dock .run::after { content: ""; position: absolute; top: 84px; width: 8px; height: 8px; border-radius: 50%; background: #5f5f5f; }
.dock em { position: absolute; right: 1px; top: -6px; width: 34px; height: 34px; border-radius: 50%; background: #fb4340; color: #fff; font: 500 21px/34px Inter, sans-serif; text-align: center; }
.dsep { width: 2px; height: 76px; background: #999; margin: 3px 20px 0 21px; }
.ge { font: italic bold 30px "Liberation Serif", serif; fill: #fff; }
.appm { font: 600 16px "Open Sans", sans-serif; fill: #fff; }
.skype { font: 700 64px "Open Sans", sans-serif; fill: #0b6da3; }
.rp { font: 600 38px "Open Sans", sans-serif; fill: #fff; }
.adobe { font: 600 46px "Open Sans", sans-serif; }
.xd { fill: #ffe0f5; } .aii { fill: #ff8418; }
.off { font: 700 36px "Open Sans", sans-serif; fill: #fff; }
.tm { font: 700 30px "Open Sans", sans-serif; fill: #fff; }
.f5b { font: bold 88px "Liberation Serif", serif; fill: #fff; }

/* volume-style overlay */
.airplane { left: 125px; top: 150px; width: 771px; height: 155px; background: rgba(15,15,15,.93); display: flex; align-items: center; gap: 64px; padding-left: 52px; font: 300 63px/155px "Open Sans", sans-serif; color: #fff; white-space: nowrap; }
```
